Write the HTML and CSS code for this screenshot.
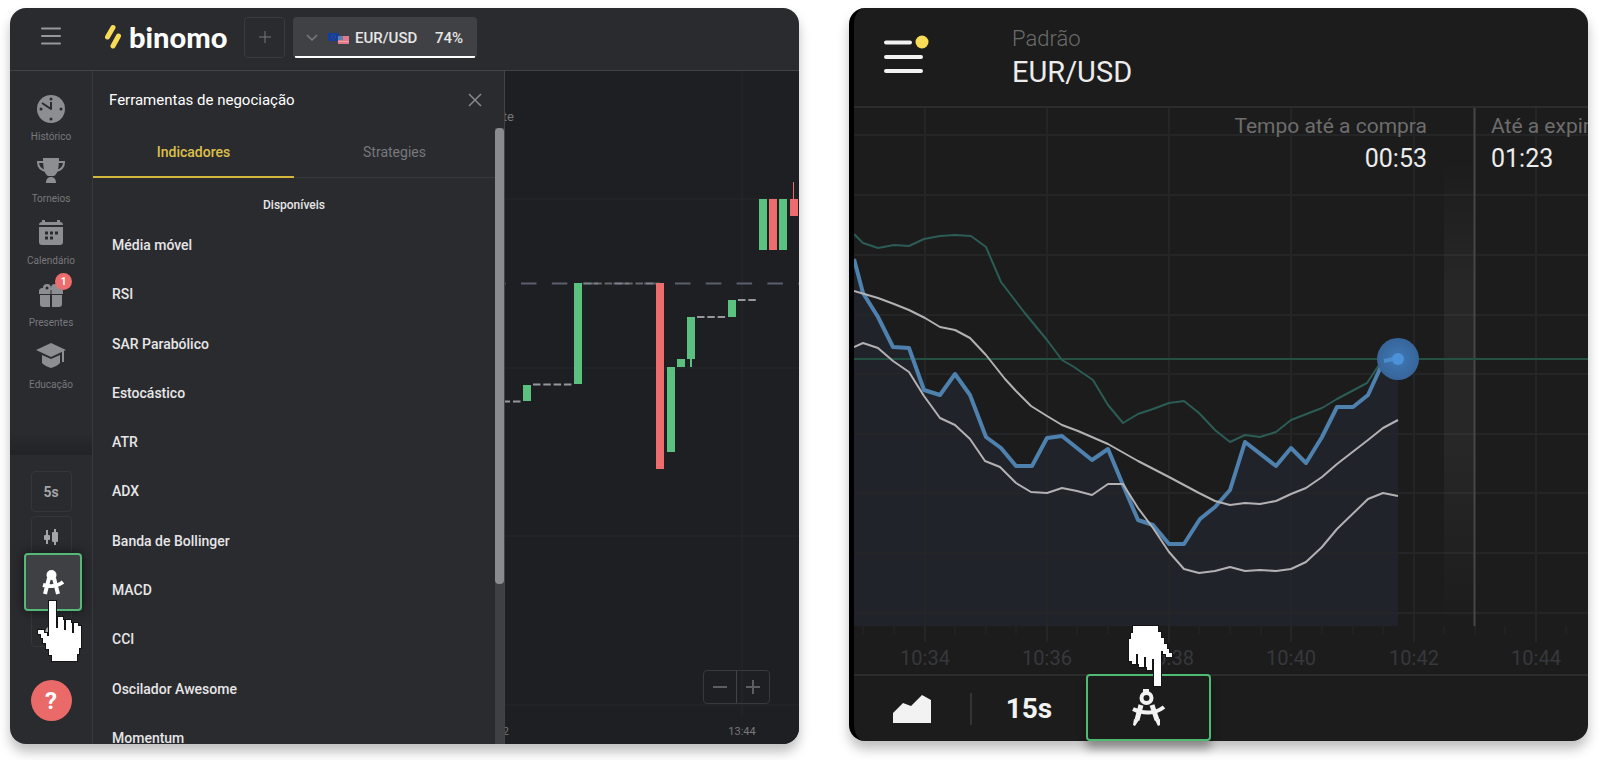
FILE: index.html
```
<!DOCTYPE html>
<html lang="pt">
<head>
  <meta charset="UTF-8">
  <meta name="viewport" content="width=device-width, initial-scale=1.0">
  <title>Binomo</title>
  <link rel="stylesheet" href="styles.css">
</head>
<body>
  <section class="desktop">
    <header class="topbar">
      <button type="button" class="icon-button menu" aria-label="Menu">
        <svg width="20" height="18" viewBox="0 0 20 18"><path d="M1 1.5h18M1 9h18M1 16.500h18" stroke="#97989b" stroke-width="2" stroke-linecap="round"/></svg>
      </button>
      <a href="#" class="logo">
        <svg width="18" height="26" viewBox="0 0 18 26"><path d="M9 3.500L3.500 13M14.500 12L9 22" stroke="#f8dc55" stroke-width="5" stroke-linecap="round"/></svg>
        <span>binomo</span>
      </a>
      <button type="button" class="add" aria-label="Adicionar">
        <svg width="14" height="14" viewBox="0 0 14 14"><path d="M7 1v12M1 7h12" stroke="#77787b" stroke-width="1"/></svg>
      </button>
      <button type="button" class="pair">
        <svg width="12" height="8" viewBox="0 0 12 8"><path d="M1 1l5 5 5-5" fill="none" stroke="#7b7c7f" stroke-width="1.500"/></svg>
        <svg class="flags" width="21" height="11" viewBox="0 0 21 11">
          <rect width="11" height="8" fill="#153e9b"/>
          <circle cx="5.500" cy="4" r="2" fill="none" stroke="#3b5f8e" stroke-width="1" stroke-dasharray="1 1"/>
          <rect x="10" y="3" width="11" height="8" fill="#e2798a"/>
          <path d="M10 8.500h11" stroke="#eba3ae" stroke-width="1"/>
          <rect x="10" y="3" width="5" height="4" fill="#5c7fae"/>
        </svg>
        <span class="pair-name">EUR/USD</span>
        <span>74%</span>
      </button>
    </header>

    <div class="workspace">
      <aside class="sidebar">
        <nav>
          <a href="#">
            <svg width="28" height="28" viewBox="0 0 28 28"><circle cx="14" cy="14" r="14" fill="#8d8e91"/><g fill="#2a2b2f"><circle cx="14" cy="4" r="1.500"/><circle cx="14" cy="24" r="1.500"/><circle cx="4" cy="14" r="1.500"/><circle cx="24" cy="14" r="1.500"/></g><path d="M14 7v7L5 8" fill="none" stroke="#2a2b2f" stroke-width="2" stroke-linejoin="round"/></svg>
            <span>Histórico</span>
          </a>
          <a href="#">
            <svg width="28" height="28" viewBox="0 0 28 28"><path d="M6 1h16c0 9-1 16-5 18h-6C7 17 6 10 6 1zM9 26c0-4 2-6 5-6s5 2 5 6z" fill="#8d8e91"/><path d="M7 5H1c0 5 3 8 8 9M21 5h6c0 5-3 8-8 9" fill="none" stroke="#8d8e91" stroke-width="2"/></svg>
            <span>Torneios</span>
          </a>
          <a href="#">
            <svg width="28" height="28" viewBox="0 0 28 28"><path d="M2 8h24v15a3 3 0 0 1-3 3H5a3 3 0 0 1-3-3zM2 6c0-2 1-3 3-3V1h3v2h12V1h3v2c2 0 3 1 3 3z" fill="#8d8e91"/><path d="M8 14h3M13 14h3M18 14h3M8 19h3M13 19h3" stroke="#2a2b2f" stroke-width="3"/></svg>
            <span>Calendário</span>
          </a>
          <a href="#">
            <svg width="28" height="28" viewBox="0 0 28 28"><path d="M2 11c0-3 1-4 4-4a4 4 0 1 1 8 0 4 4 0 1 1 8 0c3 0 4 1 4 4v2H2zM3 14h10v12H6a3 3 0 0 1-3-3zM15 14h10v9a3 3 0 0 1-3 3h-7z" fill="#8d8e91"/><circle cx="10" cy="7" r="1.500" fill="#2a2b2f"/><path d="M14 9v17" stroke="#2a2b2f" stroke-width="1"/></svg>
            <span class="badge">1</span>
            <span>Presentes</span>
          </a>
          <a href="#">
            <svg width="30" height="28" viewBox="0 0 30 28"><path d="M15 0l15 7-15 7L0 7zM6 12l9 4 9-4v8c-3 3-6 4-9 5-3-1-6-2-9-5z" fill="#8d8e91"/><path d="M27 8v11" stroke="#8d8e91" stroke-width="2"/></svg>
            <span>Educação</span>
          </a>
        </nav>
        <div class="tools">
          <button type="button">5s</button>
          <button type="button" aria-label="Tipo de gráfico">
            <svg width="16" height="18" viewBox="0 0 16 18"><path d="M4 2v14M12 1v16" stroke="#a4a5a7" stroke-width="2"/><rect x="1" y="7" width="6" height="5" rx="1" fill="#a4a5a7"/><rect x="9" y="4" width="6" height="10" rx="1" fill="#a4a5a7"/></svg>
          </button>
          <button type="button" class="active" aria-label="Ferramentas">
            <svg width="22" height="26" viewBox="0 0 22 26"><circle cx="9.500" cy="6" r="5" fill="#fff"/><path d="M7 9L3 25M12 9l4 16" stroke="#fff" stroke-width="4"/><path d="M1 16c7 2 15 1 20-3" fill="none" stroke="#fff" stroke-width="4"/></svg>
            <svg class="hand" width="46" height="62" viewBox="0 0 46 62"><use href="#hand"/></svg>
          </button>
          <button type="button" aria-label="Desenhar">
            <svg width="16" height="16" viewBox="0 0 16 16"><path d="M2 14l1-4 9-9 3 3-9 9z" fill="#a4a5a7"/></svg>
          </button>
          <button type="button" class="help">?</button>
        </div>
      </aside>

      <section class="panel">
        <header class="panel-head">
          <h2>Ferramentas de negociação</h2>
          <button type="button" class="icon-button" aria-label="Fechar">
            <svg width="14" height="14" viewBox="0 0 14 14"><path d="M1 1l12 12M13 1L1 13" stroke="#88898c" stroke-width="1.500"/></svg>
          </button>
        </header>
        <div class="panel-body">
          <div class="panel-content">
            <div class="tabs">
              <button type="button" class="selected">Indicadores</button>
              <button type="button">Strategies</button>
            </div>
            <h3>Disponíveis</h3>
            <ul>
              <li>Média móvel</li>
              <li>RSI</li>
              <li>SAR Parabólico</li>
              <li>Estocástico</li>
              <li>ATR</li>
              <li>ADX</li>
              <li>Banda de Bollinger</li>
              <li>MACD</li>
              <li>CCI</li>
              <li>Oscilador Awesome</li>
              <li>Momentum</li>
            </ul>
          </div>
          <div class="scrollbar"><div class="thumb"></div></div>
        </div>
      </section>

      <div class="candles">
        <svg viewBox="505 71 294 673">
          <path d="M742 71V715M505 199H799M505 368H799M505 536H799M505 705H799" stroke="#27282c" stroke-width="1"/>
          <path d="M505 283.500H799" stroke="#5a5f6e" stroke-width="2" stroke-dasharray="15.500 15.300" stroke-dashoffset="14.800"/>
          <g stroke="#96979a" stroke-width="2" stroke-dasharray="7.500 2.800">
            <path d="M505 401.500H510M513 401.500H521"/>
            <path d="M533 384.500H572M697 317H727M738 300H758"/>
            <path d="M584 283.500H655" stroke-opacity=".6"/>
          </g>
          <g fill="#5bc17f">
            <path d="M523 385h8v16h-8zM574 283h8v101h-8zM667 367h8v85h-8zM677 359h8v8h-8zM687 317h8v42h-8zM690 359h2v8h-2zM728 300h8v17h-8zM759 199h8v51h-8zM779 199h8v51h-8z"/>
          </g>
          <path d="M656 283h8v186h-8zM769 199h8v51h-8zM790 199h8v17h-8zM793 182h1v17h-1z" fill="#ed6d6e"/>
          <g class="chart-labels">
            <text x="514" y="121" font-size="13" text-anchor="end">te</text>
            <text x="509" y="735" text-anchor="end">2</text>
            <text x="742" y="735" text-anchor="middle">13:44</text>
          </g>
        </svg>
        <div class="zoom">
          <button type="button" aria-label="Diminuir"><svg width="14" height="14" viewBox="0 0 14 14"><path d="M0 7h14" stroke="#5d5e61" stroke-width="2"/></svg></button>
          <button type="button" aria-label="Aumentar"><svg width="14" height="14" viewBox="0 0 14 14"><path d="M0 7h14M7 0v14" stroke="#5d5e61" stroke-width="2"/></svg></button>
        </div>
      </div>
    </div>
  </section>

  <section class="mobile">
    <header class="mobile-head">
      <button type="button" class="icon-button mobile-menu" aria-label="Menu">
        <svg width="46" height="40" viewBox="0 0 46 40"><path d="M2 8.500h24M2 23h35M2 37h35" stroke="#f2f2f2" stroke-width="4" stroke-linecap="round"/><circle cx="38" cy="8" r="9" fill="#1c1c1c"/><circle cx="38" cy="8" r="6.500" fill="#f8dc55"/></svg>
      </button>
      <div class="asset">
        <span>Padrão</span>
        <strong>EUR/USD</strong>
      </div>
    </header>

    <div class="line-chart">
      <svg viewBox="854 108 734 566">
        <defs>
          <linearGradient id="band" x1="0" y1="0" x2="0" y2="1">
            <stop offset=".1" stop-color="#fff" stop-opacity="0"/>
            <stop offset=".35" stop-color="#fff" stop-opacity=".05"/>
            <stop offset=".65" stop-color="#fff" stop-opacity=".05"/>
            <stop offset="1" stop-color="#fff" stop-opacity="0"/>
          </linearGradient>
          <radialGradient id="ball">
            <stop offset="0" stop-color="#3f78b5"/>
            <stop offset="1" stop-color="#37659a"/>
          </radialGradient>
        </defs>
        <path d="M854 259L863 293 878 317 893 347 909 348 924 390 940 395 955 374 970 395 986 437 1001 448 1016 466H1032L1047 438 1062 436 1092 460 1108 449 1123 485 1138 520 1153 525 1169 544H1184L1200 519 1215 507 1230 490 1245 442 1276 466 1291 448 1306 463 1322 437 1337 407H1353L1368 395 1384 360 1398 359V626H854z" fill="#20232a"/>
        <path d="M854 135H1588M854 195H1588M854 255H1588M854 315H1588M854 374H1588M854 434H1588M854 493H1588M854 553H1588M854 613H1588M925 108V642M1047 108V642M1169 108V642M1291 108V642M1414 108V642M1536 108V642" stroke="#242527" stroke-width="2"/>
        <path d="M863 626v8M894 626v8M955 626v8M986 626v8M1016 626v8M1077 626v8M1108 626v8M1199 626v8M1230 626v8M1261 626v8M1322 626v8M1353 626v8M1383 626v8M1444 626v8M1475 626v8M1505 626v8M1566 626v8" stroke="#262729" stroke-width="1"/>
        <rect x="1444" y="108" width="30" height="518" fill="url(#band)"/>
        <path d="M1474.500 108V626" stroke="#464646" stroke-width="2"/>
        <path d="M854 359H1588" stroke="#235040" stroke-width="2"/>
        <g fill="none" stroke-linejoin="round">
          <path d="M854 234L863 243 878 248 894 245 909 246 924 239 940 236 955 235 971 236 986 247 1001 282 1024 312 1047 340 1062 360 1074 367 1093 380 1108 405 1123 423 1138 414 1153 409 1169 403 1184 401 1199 413 1215 430 1230 442 1245 435 1260 437 1276 432 1291 420 1322 408 1337 399 1367 383 1383 359" stroke="#2b5c55" stroke-width="2"/>
          <path d="M854 259L863 293 878 317 893 347 909 348 924 390 940 395 955 374 970 395 986 437 1001 448 1016 466H1032L1047 438 1062 436 1092 460 1108 449 1123 485 1138 520 1153 525 1169 544H1184L1200 519 1215 507 1230 490 1245 442 1276 466 1291 448 1306 463 1322 437 1337 407H1353L1368 395 1384 360 1398 359" stroke="#4e81ae" stroke-width="4"/>
          <path d="M854 291L878 298 894 304 909 310 925 318 940 327 955 330 970 338 986 355 1005 379 1016 391 1031 406 1047 416 1062 425 1078 431 1108 444 1138 461 1169 477 1199 493 1215 501 1230 505 1245 503 1260 504 1276 501 1291 494 1306 488 1322 477 1337 464 1368 440 1383 428 1398 420M854 347L863 343 878 348 893 361 909 372 924 396 940 418 955 425 970 439 985 461 1000 467 1016 483 1031 492 1047 493 1062 488 1077 491 1092 495 1108 484H1123L1138 508 1153 528 1169 552 1184 569 1199 573 1215 571 1230 567 1245 571 1260 570 1276 571 1291 569 1306 562 1322 547 1337 529 1368 499 1383 493 1398 496" stroke="#b3b1b3" stroke-width="2"/>
        </g>
        <circle cx="1398" cy="359" r="21" fill="url(#ball)"/>
        <path d="M1384 361l14-3" stroke="#4a8ccd" stroke-width="4"/>
        <circle cx="1398" cy="359" r="6" fill="#4c92d9"/>
        <g class="time-labels">
          <text x="925" y="665">10:34</text>
          <text x="1047" y="665">10:36</text>
          <text x="1169" y="665">10:38</text>
          <text x="1291" y="665">10:40</text>
          <text x="1414" y="665">10:42</text>
          <text x="1536" y="665">10:44</text>
        </g>
        <g class="timers">
          <text x="1427" y="133" text-anchor="end">Tempo até a compra</text>
          <text x="1427" y="167" text-anchor="end" class="time">00:53</text>
          <text x="1491" y="133">Até a expiração</text>
          <text x="1491" y="167" class="time">01:23</text>
        </g>
      </svg>
    </div>

    <footer class="mobile-bar">
      <button type="button" class="area" aria-label="Tipo de gráfico">
        <svg width="38" height="28" viewBox="0 0 38 28"><path d="M0 28V18L10 8l8 3L29 0l9 5v23z" fill="#f2f2f2"/></svg>
      </button>
      <button type="button" class="interval">15s</button>
      <button type="button" class="indicators" aria-label="Indicadores">
        <svg width="34" height="38" viewBox="0 0 34 38"><path d="M11 0h6v5h-6z" fill="#f2f2f2"/><circle cx="14.500" cy="9" r="5" fill="none" stroke="#f2f2f2" stroke-width="4"/><path d="M9 16L5 31M20 16l5 15" stroke="#f2f2f2" stroke-width="5"/><path d="M2 30l5 1-4 6-2-1zM23 31l5-1v6l-2 1z" fill="#f2f2f2"/><path d="M1 20c10 5 22 5 31-2" fill="none" stroke="#f2f2f2" stroke-width="4"/></svg>
        <svg class="hand" width="46" height="62" viewBox="0 0 46 62"><use href="#hand"/></svg>
      </button>
    </footer>
  </section>

  <svg class="sprite" width="0" height="0">
    <symbol id="hand" viewBox="0 0 46 62">
      <path d="M12 1h7v16h7v3h8v3h7v3h3v22h-2v6h-2v7H15v-6h-3v-6H9v-6H6v-5H4v-4H1v-4h6v3h3v3h2z" fill="#fff" stroke="#141417" stroke-width="2" paint-order="stroke"/>
      <path d="M20 17v11M28 20v10M36 23v10" stroke="#141417" stroke-width="2"/>
    </symbol>
  </svg>
</body>
</html>
```

FILE: styles.css
```
* {
  box-sizing: border-box;
}
body {
  display: grid;
  grid-template-columns: 789fr 739fr;
  align-items: start;
  gap: 50px;
  margin: 0;
  padding: 8px 12px 16px 10px;
  background: #fff;
  font-family: Roboto, sans-serif;
  color: #e6e6e7;
  overflow: hidden;
}
button {
  display: flex;
  align-items: center;
  justify-content: center;
  padding: 0;
  border: 0;
  background: none;
  color: inherit;
  font-family: inherit;
}
a {
  color: inherit;
  text-decoration: none;
}
svg {
  display: block;
  flex: none;
}
.sprite {
  position: absolute;
}

/* desktop */
.desktop {
  display: flex;
  flex-direction: column;
  min-width: 0;
  overflow: hidden;
  border-radius: 16px;
  background: #2a2b2f;
  box-shadow: 0 8px 12px rgba(0, 0, 0, 0.25);
}
.topbar {
  display: flex;
  align-items: center;
  height: 63px;
  padding: 0 0 4px 31px;
  border-bottom: 1px solid #424347;
}
.menu {
  margin-top: -2px;
}
.logo {
  display: flex;
  align-items: center;
  gap: 7px;
  width: 140px;
  margin-left: 43px;
}
.logo span {
  color: #fff;
  font-family: Lato, sans-serif;
  font-size: 29px;
  font-weight: 900;
  line-height: 32px;
}
.add {
  width: 41px;
  height: 41px;
  border: 1px solid #3a3b3f;
  border-radius: 4px;
}
.pair {
  width: 184px;
  height: 41px;
  margin-left: 8px;
  padding: 2px 14px 0 13px;
  border-radius: 4px;
  background: linear-gradient(#fff, #fff) center bottom / 180px 2px no-repeat #404144;
  font-size: 15px;
  font-weight: 500;
}
.flags {
  margin: 0 6px 0 10px;
}
.pair-name {
  flex: 1;
  text-align: left;
}
.workspace {
  display: flex;
}
.sidebar {
  display: flex;
  flex-direction: column;
  width: 83px;
  border-right: 1px solid #38393d;
}
.sidebar nav {
  display: flex;
  flex: 1;
  flex-direction: column;
  padding-top: 20px;
  background: linear-gradient(#2a2b2f 94%, #222327);
}
.sidebar nav a {
  position: relative;
  display: flex;
  flex-direction: column;
  align-items: center;
  gap: 7px;
  height: 62px;
  padding-top: 4px;
  color: #77787b;
  font-size: 10px;
  line-height: 14px;
}
.badge {
  position: absolute;
  top: -4px;
  left: 45px;
  width: 17px;
  border-radius: 50%;
  background: #ed6d6e;
  color: #fff;
  font-weight: 700;
  line-height: 17px;
  text-align: center;
}
.tools {
  display: flex;
  flex-direction: column;
  align-items: center;
  gap: 4px;
  padding: 16px 0 23px;
}
.tools button {
  width: 41px;
  height: 41px;
  border: 1px solid #35363a;
  border-radius: 4px;
  color: #a4a5a7;
  font-size: 14px;
  font-weight: 700;
}
.tools .active {
  position: relative;
  left: 2px;
  width: 58px;
  height: 58px;
  margin: -8px 0 -9px;
  border: 2px solid #55b878;
  background: #3f4044;
  box-shadow: 0 0 12px rgba(0, 0, 0, 0.6);
}
.hand {
  position: absolute;
}
.tools .hand {
  top: 45px;
  left: 11px;
}
.tools .help {
  margin-top: 29px;
  border: 0;
  border-radius: 50%;
  background: #e96a68;
  color: #fff;
  font-size: 24px;
}

/* indicators panel */
.panel {
  display: flex;
  flex-direction: column;
  width: 412px;
  border-right: 1px solid #424347;
}
.panel-head {
  display: flex;
  align-items: center;
  justify-content: space-between;
  height: 57px;
  padding: 0 22px 0 16px;
}
h2 {
  margin: 0;
  color: #fff;
  font-size: 15px;
  font-weight: 400;
}
.panel-body {
  display: flex;
  flex: 1;
  min-height: 0;
}
.panel-content {
  display: flex;
  flex: 1;
  flex-direction: column;
}
.tabs {
  display: flex;
  height: 50px;
  border-bottom: 1px solid #38393d;
}
.tabs button {
  flex: 1;
  height: 50px;
  border-bottom: 2px solid transparent;
  color: #77787b;
  font-size: 14px;
}
.tabs .selected {
  border-color: #d2b73c;
  color: #dcc04a;
  font-weight: 500;
}
h3 {
  margin: 17px 0 20px;
  font-size: 12px;
  font-weight: 500;
  line-height: 20px;
  text-align: center;
}
.panel ul {
  display: flex;
  flex: 1;
  flex-direction: column;
  justify-content: space-between;
  margin: 0 0 -4px;
  padding: 0 0 0 19px;
  list-style: none;
  font-size: 14px;
  font-weight: 500;
  line-height: 20px;
}
.scrollbar {
  width: 9px;
  background: #3f4043;
}
.thumb {
  height: 74%;
  border-radius: 4px;
  background: #8a8b8e;
}
.candles {
  position: relative;
  flex: 1;
  background: #1e1f23;
}
.candles > svg,
.line-chart svg {
  width: 100%;
  height: auto;
}
.chart-labels {
  fill: #77787b;
  font-size: 11px;
}
.zoom {
  position: absolute;
  right: 29px;
  bottom: 40px;
  display: flex;
  border: 1px solid #38393d;
  border-radius: 4px;
}
.zoom button {
  width: 32px;
  height: 32px;
}
.zoom button + button {
  width: 33px;
  border-left: 1px solid #424347;
}

/* mobile */
.mobile {
  min-width: 0;
  border-left: 5px solid #000;
  border-radius: 16px;
  background: #1c1c1c;
  box-shadow: 0 8px 12px rgba(0, 0, 0, 0.25);
}
.mobile-head {
  display: flex;
  height: 100px;
  padding: 15px 30px 0;
  border-bottom: 2px solid #2c2c2c;
}
.mobile-menu {
  height: 62px;
}
.asset {
  display: flex;
  flex-direction: column;
  margin-left: 82px;
}
.asset span {
  color: #6b6b6b;
  font-size: 22px;
  font-weight: 300;
  line-height: 32px;
}
.asset strong {
  color: #ececec;
  font-size: 29px;
  font-weight: 400;
  line-height: 34px;
}
.time-labels {
  fill: #37383c;
  font-size: 20px;
  text-anchor: middle;
}
.timers {
  fill: #6d6d6d;
  font-size: 21px;
}
.timers .time {
  fill: #ececec;
  font-size: 25px;
}
.mobile-bar {
  display: flex;
  align-items: center;
  height: 67px;
  border-top: 2px solid #2c2c2c;
}
.area {
  width: 118px;
  height: 32px;
  padding-right: 1px;
  border-right: 2px solid #333438;
}
.interval {
  width: 114px;
  color: #f2f2f2;
  font-size: 28px;
  font-weight: 700;
}
.indicators {
  position: relative;
  width: 125px;
  height: 67px;
  margin-top: -2px;
  border: 2px solid #4fba73;
  border-radius: 4px;
  box-shadow: 0 8px 10px rgba(0, 0, 0, 0.3);
}
.indicators .hand {
  top: -51px;
  left: 39px;
  transform: rotate(180deg);
}
```
